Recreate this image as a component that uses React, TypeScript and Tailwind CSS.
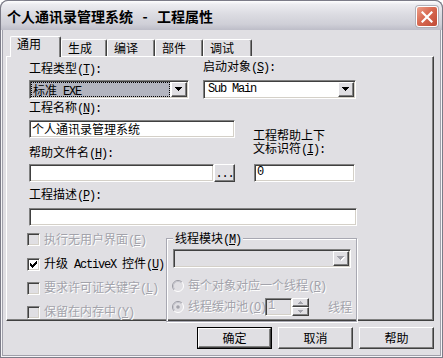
import React from "react";

const mono =
  "font-['Liberation_Mono','Noto_Sans_CJK_SC',monospace] text-[12px] tracking-[-1.2px]";
const sunken =
  "border border-t-[#808080] border-l-[#808080] border-b-white border-r-white shadow-[inset_1px_1px_0_#404040,inset_-1px_-1px_0_#d4d0c8]";
const raised =
  "border border-t-white border-l-white border-b-[#404040] border-r-[#404040] shadow-[inset_-1px_-1px_0_#808080]";
const dis = "text-[#a3a3ab] [text-shadow:1px_1px_0_#ffffff]";

function Mn({ k, colon = true }: { k: string; colon?: boolean }) {
  return (
    <span className={mono}>
      (<span className="underline underline-offset-1">{k}</span>){colon ? ":" : ""}
    </span>
  );
}

function Arrow({ disabled }: { disabled?: boolean }) {
  return (
    <svg width="8" height="5" viewBox="0 0 8 5" shapeRendering="crispEdges">
      {disabled && (
        <path d="M1 1h7v1H1zM2 2h5v1H2zM3 3h3v1H3zM4 4h1v1H4z" fill="#ffffff" />
      )}
      <path
        d="M0 0h7v1H0zM1 1h5v1H1zM2 2h3v1H2zM3 3h1v1H3z"
        fill={disabled ? "#a3a3ab" : "#000000"}
      />
    </svg>
  );
}

function DropBtn({ disabled }: { disabled?: boolean }) {
  return (
    <div className={`w-[16px] h-full bg-[#e0dfe3] ${raised} flex items-center justify-center`}>
      <Arrow disabled={disabled} />
    </div>
  );
}

function Check({ checked, disabled }: { checked?: boolean; disabled?: boolean }) {
  return (
    <div
      className={`w-[13px] h-[13px] shrink-0 ${sunken} ${
        disabled ? "bg-[#e0dfe3]" : "bg-white"
      } flex items-center justify-center`}
    >
      {checked && (
        <svg width="7" height="7" viewBox="0 0 7 7" shapeRendering="crispEdges">
          <path
            d="M6 0h1v1H6zM5 1h2v1H5zM0 2h1v1H0zM4 2h3v1H4zM0 3h2v1H0zM3 3h3v1H3zM0 4h5v1H0zM1 5h3v1H1zM2 6h1v1H2z"
            fill="#000"
          />
        </svg>
      )}
    </div>
  );
}

function Radio({ selected }: { selected?: boolean }) {
  return (
    <svg width="12" height="12" viewBox="0 0 12 12" className="shrink-0">
      <circle cx="6" cy="6" r="5" fill="#e0dfe3" />
      <path d="M2.1 9.9A5.5 5.5 0 0 1 9.9 2.1" stroke="#9a9aa2" fill="none" />
      <path d="M9.9 2.1A5.5 5.5 0 0 1 2.1 9.9" stroke="#ffffff" fill="none" />
      <path d="M2.8 9.2A4.5 4.5 0 0 1 9.2 2.8" stroke="#c4c4cc" fill="none" />
      {selected && <circle cx="6" cy="6" r="1.8" fill="#a3a3ab" />}
    </svg>
  );
}

function Tab({ label, w, selected }: { label: string; w: number; selected?: boolean }) {
  return (
    <div
      style={{ width: w }}
      className={
        selected
          ? "relative z-10 h-[21px] -mb-[1px] bg-[#e0dfe3] border-t border-l border-r border-t-white border-l-white border-r-[#404040] shadow-[inset_-1px_0_0_#808080] rounded-t-[2px] pl-[6px]"
          : "h-[17px] bg-[#e0dfe3] border-t border-l border-r border-t-white border-l-white border-r-[#404040] shadow-[inset_-1px_0_0_#808080] rounded-t-[2px] pl-[6px] pt-[1px]"
      }
    >
      {label}
    </div>
  );
}

function Button({ label, def }: { label: string; def?: boolean }) {
  return (
    <div className={`w-[75px] h-[22px] ${def ? "border border-black" : ""}`}>
      <div className={`w-full h-full bg-[#e0dfe3] ${raised} flex items-center justify-center`}>
        {label}
      </div>
    </div>
  );
}

export default function App() {
  return (
    <div className="relative w-[443px] h-[358px] bg-[#e0dfe3] rounded-t-[8px] overflow-hidden font-['Noto_Sans_CJK_SC',sans-serif] text-[12px] leading-[14px] text-black shadow-[inset_0_0_0_1px_#7c7c88,inset_0_0_0_2px_#f4f4f6,inset_0_0_0_3px_#a0a0aa]">
      {/* Title bar */}
      <div className="h-[30px] flex items-start justify-between pl-[6px] pr-[4px] rounded-t-[8px] border border-b-0 border-[#7c7c88] bg-[linear-gradient(to_bottom,#ffffff_0%,#ececf0_12%,#dcdce2_45%,#cfcfd7_80%,#bdbdc8_100%)]">
        <div className="pt-[7px] text-[14px] leading-[16px] font-bold whitespace-nowrap">
          个人通讯录管理系统<span className="inline-block w-[24px] text-center">-</span>工程属性
        </div>
        <div className="mt-[5px] w-[22px] h-[21px] rounded-[3px] border border-white bg-[linear-gradient(135deg,#eda08a_0%,#d86a52_45%,#c04a36_100%)] shadow-[0_0_0_1px_#b0b0b8] flex items-center justify-center">
          <svg width="12" height="12" viewBox="0 0 12 12">
            <path d="M1.5 1.5L10.5 10.5M10.5 1.5L1.5 10.5" stroke="#ffffff" strokeWidth="2.2" strokeLinecap="square" />
          </svg>
        </div>
      </div>

      {/* Tabs */}
      <div className="mt-[6px] ml-[10px] h-[20px] flex items-end">
        <Tab label="通用" w={51} selected />
        <Tab label="生成" w={46} />
        <Tab label="编译" w={48} />
        <Tab label="部件" w={48} />
        <Tab label="调试" w={49} />
      </div>

      {/* Panel */}
      <div className="ml-[6px] w-[428px] h-[265px] border border-t-white border-l-white border-r-[#404040] border-b-[#404040] shadow-[inset_-1px_-1px_0_#808080] pl-[22px]">
        {/* Row A */}
        <div className="flex">
          <div className="w-[160px]">
            <div className="mt-[4px]">
              工程类型<Mn k="T" />
            </div>
            <div className={`mt-[3px] h-[19px] bg-white ${sunken} flex p-[1px]`}>
              <div className="flex-1 mr-[1px] border border-dotted border-black bg-[#b2b4bf] pl-[1px] leading-[13px] whitespace-nowrap">
                标准<span className={mono}> EXE</span>
              </div>
              <DropBtn />
            </div>
          </div>
          <div className="ml-[14px] w-[153px]">
            <div className="mt-[2px]">
              启动对象<Mn k="S" />
            </div>
            <div className={`mt-[5px] h-[19px] bg-white ${sunken} flex p-[1px]`}>
              <div className={`flex-1 pl-[3px] leading-[15px] whitespace-pre ${mono}`}>Sub Main</div>
              <DropBtn />
            </div>
          </div>
        </div>

        {/* Row B */}
        <div className="flex items-end">
          <div className="w-[206px]">
            <div className="mt-[1px]">
              工程名称<Mn k="N" />
            </div>
            <div className={`mt-[4px] h-[18px] bg-white ${sunken} pl-[2px] leading-[15px] whitespace-nowrap`}>
              个人通讯录管理系统
            </div>
            <div className="mt-[7px]">
              帮助文件名<Mn k="H" />
            </div>
            <div className="mt-[3px] flex">
              <div className={`w-[185px] h-[18px] bg-white ${sunken}`} />
              <div className={`w-[21px] h-[18px] bg-[#e0dfe3] ${raised} flex items-end justify-center pb-[2px] ${mono} leading-[10px]`}>
                ...
              </div>
            </div>
          </div>
          <div className="ml-[18px] w-[103px]">
            <div className="leading-[13px] whitespace-nowrap">
              工程帮助上下
              <br />
              文标识符<Mn k="I" />
            </div>
            <div className={`mt-[7px] ml-[1px] w-[101px] h-[18px] bg-white ${sunken} pl-[2px] leading-[15px] ${mono}`}>
              0
            </div>
          </div>
        </div>

        {/* Row C */}
        <div className="mt-[5px]">
          工程描述<Mn k="P" />
        </div>
        <div className={`mt-[5px] w-[328px] h-[18px] bg-white ${sunken}`} />

        {/* Row D */}
        <div className="flex">
          <div className="-ml-[2px] w-[139px] mt-[1px]">
            <div className="h-[25px] flex items-center gap-[4px]">
              <Check disabled />
              <span className={`${dis} whitespace-nowrap`}>
                执行无用户界面<Mn k="E" colon={false} />
              </span>
            </div>
            <div className="h-[24px] flex items-center gap-[4px]">
              <Check checked />
              <span className="whitespace-pre">
                升级<span className={mono}> ActiveX </span>控件<Mn k="U" colon={false} />
              </span>
            </div>
            <div className="h-[24px] flex items-center gap-[4px]">
              <Check disabled />
              <span className={`${dis} whitespace-nowrap`}>
                要求许可证关键字<Mn k="L" colon={false} />
              </span>
            </div>
            <div className="h-[24px] flex items-center gap-[4px]">
              <Check disabled />
              <span className={`${dis} whitespace-nowrap`}>
                保留在内存中<Mn k="Y" colon={false} />
              </span>
            </div>
          </div>

          <div className="relative mt-[12px] w-[191px] h-[84px] border border-[#a8a8b2] shadow-[inset_1px_1px_0_#ffffff,1px_1px_0_#ffffff]">
            <div className="absolute -top-[8px] left-[6px] px-[2px] bg-[#e0dfe3] whitespace-nowrap">
              线程模块<Mn k="M" colon={false} />
            </div>
            <div className={`mt-[10px] ml-[6px] w-[178px] h-[19px] bg-[#e0dfe3] ${sunken} flex justify-end p-[1px]`}>
              <DropBtn disabled />
            </div>
            <div className="mt-[10px] ml-[5px] h-[16px] flex items-center gap-[4px]">
              <Radio />
              <span className={`${dis} whitespace-nowrap`}>
                每个对象对应一个线程<Mn k="R" colon={false} />
              </span>
            </div>
            <div className="mt-[4px] ml-[5px] h-[18px] flex items-center">
              <Radio selected />
              <span className={`${dis} whitespace-nowrap ml-[4px] w-[77px]`}>
                线程缓冲池<Mn k="O" colon={false} />
              </span>
              <div className={`w-[27px] h-[18px] bg-[#e0dfe3] ${sunken} pl-[2px] leading-[15px] ${mono} ${dis}`}>
                1
              </div>
              <div className="w-[17px] h-[18px] flex flex-col">
                <div className={`h-[9px] bg-[#e0dfe3] ${raised} flex items-center justify-center`}>
                  <svg width="5" height="3" viewBox="0 0 5 3" shapeRendering="crispEdges">
                    <path d="M2 0h1v1H2zM1 1h3v1H1zM0 2h5v1H0z" fill="#a3a3ab" />
                  </svg>
                </div>
                <div className={`h-[9px] bg-[#e0dfe3] ${raised} flex items-center justify-center`}>
                  <svg width="5" height="3" viewBox="0 0 5 3" shapeRendering="crispEdges">
                    <path d="M0 0h5v1H0zM1 1h3v1H1zM2 2h1v1H2z" fill="#a3a3ab" />
                  </svg>
                </div>
              </div>
              <span className={`ml-[19px] ${dis}`}>线程</span>
            </div>
          </div>
        </div>
      </div>

      {/* Buttons */}
      <div className="mt-[6px] pr-[9px] flex justify-end gap-[6px]">
        <Button label="确定" def />
        <Button label="取消" />
        <Button label="帮助" />
      </div>
    </div>
  );
}
